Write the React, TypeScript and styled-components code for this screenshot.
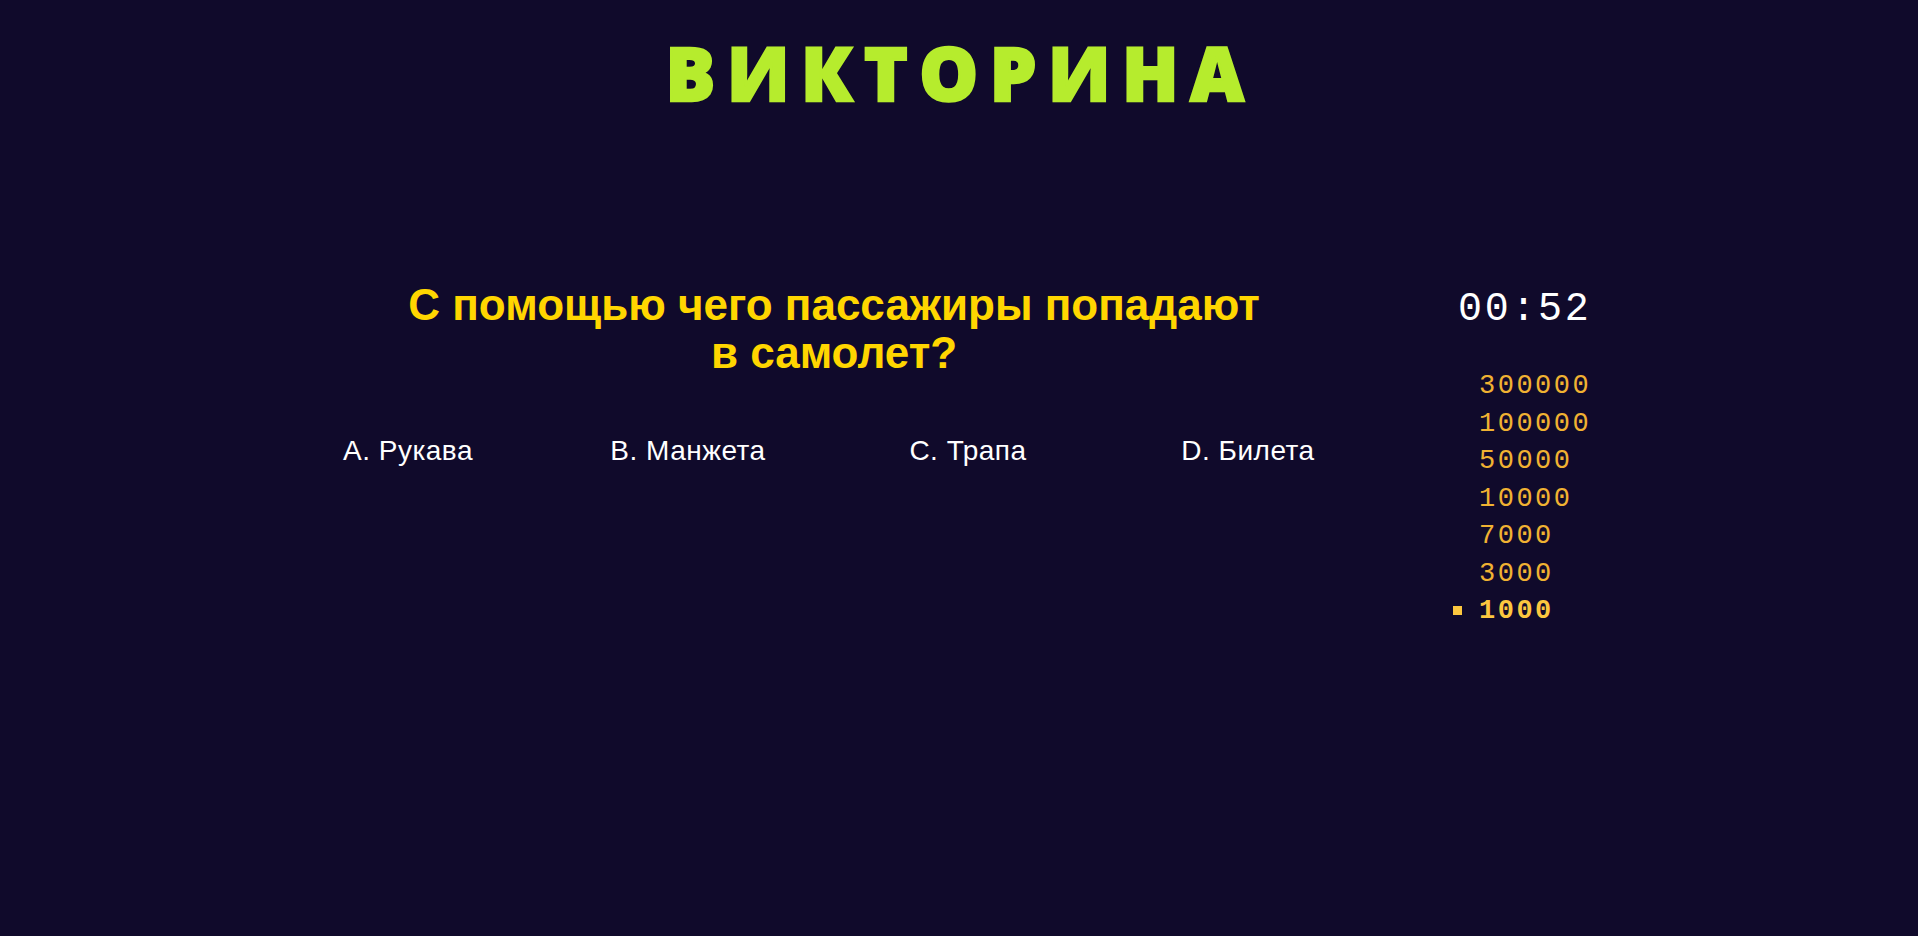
import React from "react";
import styled, { createGlobalStyle } from "styled-components";

const Global = createGlobalStyle`
  html, body {
    margin: 0;
    padding: 0;
    background: #100a2b;
    min-height: 100%;
  }
  body {
    height: 936px;
    overflow: hidden;
    font-family: "Liberation Sans", Arial, sans-serif;
  }
`;

const Page = styled.div`
  min-height: 936px;
  background: #100a2b;
  display: flex;
  flex-direction: column;
  align-items: center;
`;

const Title = styled.h1`
  margin: 30px 0 0 3px;
  font-family: "Open Sans", sans-serif;
  font-weight: 800;
  font-size: 74px;
  line-height: 86px;
  letter-spacing: 11.5px;
  color: #b6ec2d;
  -webkit-text-stroke: 2.4px #b6ec2d;
`;

const Layout = styled.div`
  width: 1382px;
  margin-top: 164px;
  display: flex;
  align-items: flex-start;
`;

const Main = styled.main`
  width: 1120px;
  display: flex;
  flex-direction: column;
  align-items: center;
`;

const Question = styled.h2`
  margin: 1px 0 0 12px;
  width: 920px;
  font-size: 44px;
  line-height: 48px;
  font-weight: 700;
  text-align: center;
  color: #ffd600;
`;

const Answers = styled.div`
  margin-top: 58px;
  width: 100%;
  display: grid;
  grid-template-columns: repeat(4, 1fr);
`;

const Answer = styled.div`
  text-align: center;
  font-size: 28px;
  letter-spacing: 0.5px;
  color: #ffffff;
`;

const Sidebar = styled.aside`
  flex: 1;
  display: flex;
  flex-direction: column;
`;

const Timer = styled.div`
  margin: 5px 0 0 70px;
  font-family: "Liberation Mono", monospace;
  font-size: 40px;
  line-height: 50px;
  letter-spacing: 2.7px;
  color: #ffffff;
`;

const Prizes = styled.ul`
  margin: 33px 0 0;
  padding-left: 91px;
  list-style: none;
  font-family: "Liberation Mono", monospace;
  font-size: 27px;
  line-height: 37.5px;
  letter-spacing: 2.5px;
`;

const Prize = styled.li<{ $active?: boolean }>`
  position: relative;
  color: ${(p) => (p.$active ? "#fcc73f" : "#f0b232")};
  font-weight: ${(p) => (p.$active ? 700 : 400)};

  &::before {
    content: "";
    display: ${(p) => (p.$active ? "block" : "none")};
    position: absolute;
    left: -26px;
    top: 13px;
    width: 9px;
    height: 9px;
    background: #fcc73f;
  }
`;

const prizes = ["300000", "100000", "50000", "10000", "7000", "3000", "1000"];
const answers = ["A. Рукава", "B. Манжета", "C. Трапа", "D. Билета"];

export default function App() {
  return (
    <>
      <Global />
      <Page>
        <Title>ВИКТОРИНА</Title>
        <Layout>
          <Main>
            <Question>
              С помощью чего пассажиры попадают
              <br />в самолет?
            </Question>
            <Answers>
              {answers.map((a) => (
                <Answer key={a}>{a}</Answer>
              ))}
            </Answers>
          </Main>
          <Sidebar>
            <Timer>00:52</Timer>
            <Prizes>
              {prizes.map((p, i) => (
                <Prize key={p} $active={i === prizes.length - 1}>
                  {p}
                </Prize>
              ))}
            </Prizes>
          </Sidebar>
        </Layout>
      </Page>
    </>
  );
}
